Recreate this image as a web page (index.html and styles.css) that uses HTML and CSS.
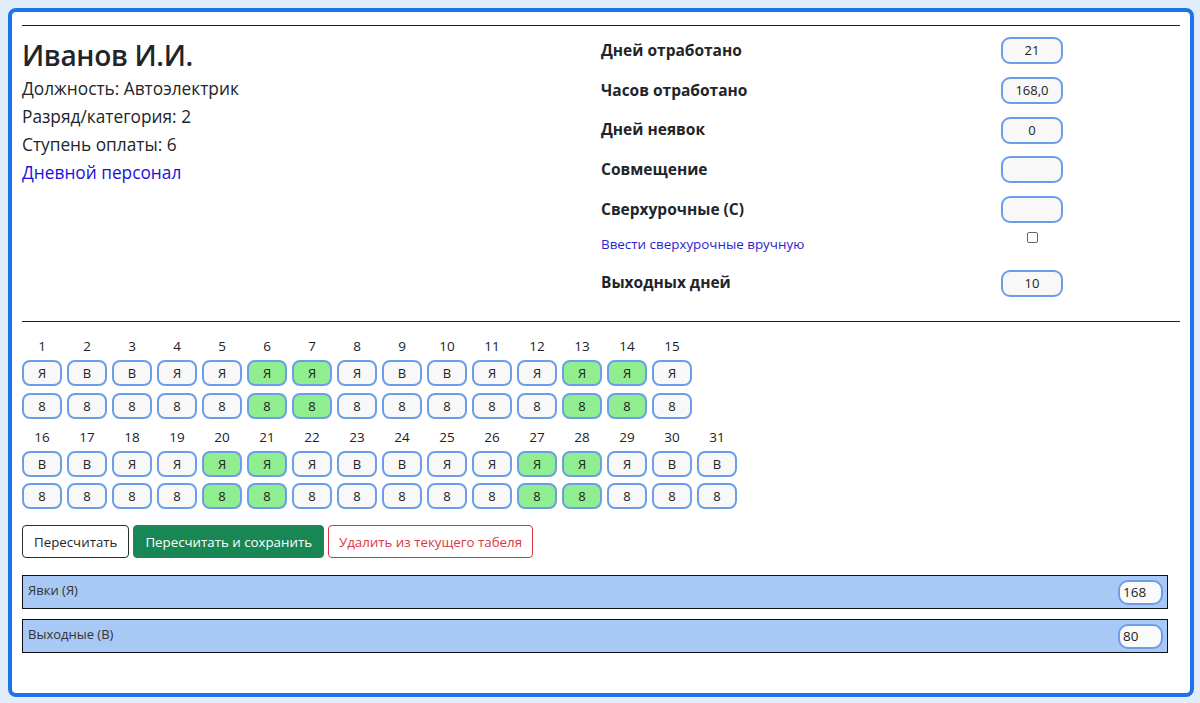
FILE: index.html
```html
<!DOCTYPE html>
<html lang="ru">
<head>
<meta charset="utf-8">
<title>Табель</title>
<link rel="stylesheet" href="styles.css">
</head>
<body>
<div class="card">
  <hr class="rule rule-top">
  <div class="info">
    <div class="person">
      <h1 class="name">Иванов И.И.</h1>
      <p class="line">Должность: Автоэлектрик</p>
      <p class="line">Разряд/категория: 2</p>
      <p class="line">Ступень оплаты: 6</p>
      <a class="line link">Дневной персонал</a>
    </div>
    <div class="stats">
      <div class="stat"><span class="stat-label">Дней отработано</span><span class="field">21</span></div>
      <div class="stat"><span class="stat-label">Часов отработано</span><span class="field">168,0</span></div>
      <div class="stat"><span class="stat-label">Дней неявок</span><span class="field">0</span></div>
      <div class="stat"><span class="stat-label">Совмещение</span><span class="field"></span></div>
      <div class="stat"><span class="stat-label">Сверхурочные (С)</span><span class="field"></span></div>
      <div class="stat stat-small"><a class="small-link">Ввести сверхурочные вручную</a><span class="check-wrap"><span class="check"></span></span></div>
      <div class="stat"><span class="stat-label">Выходных дней</span><span class="field">10</span></div>
    </div>
  </div>
  <hr class="rule rule-mid">
  <div class="days">
    <div class="day"><span class="num">1</span><span class="cell">Я</span><span class="cell">8</span></div>
    <div class="day"><span class="num">2</span><span class="cell">В</span><span class="cell">8</span></div>
    <div class="day"><span class="num">3</span><span class="cell">В</span><span class="cell">8</span></div>
    <div class="day"><span class="num">4</span><span class="cell">Я</span><span class="cell">8</span></div>
    <div class="day"><span class="num">5</span><span class="cell">Я</span><span class="cell">8</span></div>
    <div class="day"><span class="num">6</span><span class="cell on">Я</span><span class="cell on">8</span></div>
    <div class="day"><span class="num">7</span><span class="cell on">Я</span><span class="cell on">8</span></div>
    <div class="day"><span class="num">8</span><span class="cell">Я</span><span class="cell">8</span></div>
    <div class="day"><span class="num">9</span><span class="cell">В</span><span class="cell">8</span></div>
    <div class="day"><span class="num">10</span><span class="cell">В</span><span class="cell">8</span></div>
    <div class="day"><span class="num">11</span><span class="cell">Я</span><span class="cell">8</span></div>
    <div class="day"><span class="num">12</span><span class="cell">Я</span><span class="cell">8</span></div>
    <div class="day"><span class="num">13</span><span class="cell on">Я</span><span class="cell on">8</span></div>
    <div class="day"><span class="num">14</span><span class="cell on">Я</span><span class="cell on">8</span></div>
    <div class="day"><span class="num">15</span><span class="cell">Я</span><span class="cell">8</span></div>
  </div>
  <div class="days days-2">
    <div class="day"><span class="num">16</span><span class="cell">В</span><span class="cell">8</span></div>
    <div class="day"><span class="num">17</span><span class="cell">В</span><span class="cell">8</span></div>
    <div class="day"><span class="num">18</span><span class="cell">Я</span><span class="cell">8</span></div>
    <div class="day"><span class="num">19</span><span class="cell">Я</span><span class="cell">8</span></div>
    <div class="day"><span class="num">20</span><span class="cell on">Я</span><span class="cell on">8</span></div>
    <div class="day"><span class="num">21</span><span class="cell on">Я</span><span class="cell on">8</span></div>
    <div class="day"><span class="num">22</span><span class="cell">Я</span><span class="cell">8</span></div>
    <div class="day"><span class="num">23</span><span class="cell">В</span><span class="cell">8</span></div>
    <div class="day"><span class="num">24</span><span class="cell">В</span><span class="cell">8</span></div>
    <div class="day"><span class="num">25</span><span class="cell">Я</span><span class="cell">8</span></div>
    <div class="day"><span class="num">26</span><span class="cell">Я</span><span class="cell">8</span></div>
    <div class="day"><span class="num">27</span><span class="cell on">Я</span><span class="cell on">8</span></div>
    <div class="day"><span class="num">28</span><span class="cell on">Я</span><span class="cell on">8</span></div>
    <div class="day"><span class="num">29</span><span class="cell">Я</span><span class="cell">8</span></div>
    <div class="day"><span class="num">30</span><span class="cell">В</span><span class="cell">8</span></div>
    <div class="day"><span class="num">31</span><span class="cell">В</span><span class="cell">8</span></div>
  </div>
  <div class="actions">
    <button class="btn btn-dark">Пересчитать</button>
    <button class="btn btn-green">Пересчитать и сохранить</button>
    <button class="btn btn-red">Удалить из текущего табеля</button>
  </div>
  <div class="bar"><span class="bar-label">Явки (Я)</span><span class="bar-field">168</span></div>
  <div class="bar"><span class="bar-label">Выходные (В)</span><span class="bar-field">80</span></div>
</div>
</body>
</html>
```

FILE: styles.css
```css
* { box-sizing: border-box; }
html, body { margin: 0; padding: 0; }
body {
  background: #e2edfb;
  font-family: "Open Sans", "Noto Sans", sans-serif;
  color: #212529;
}
.card {
  margin: 8px 6px 6px 8px;
  height: 689px;
  background: #fff;
  border: 4px solid #1f73e8;
  border-radius: 8px;
  padding: 13px 10px 0 10px;
}
.rule {
  border: 0;
  border-top: 1px solid #222;
  margin: 0;
}
.info {
  display: grid;
  grid-template-columns: 579px 579px;
  height: 295px;
}
.person { padding-top: 9px; }
.name {
  margin: 0;
  font-size: 28px;
  font-weight: 600;
  line-height: 40px;
  color: #212529;
  letter-spacing: -0.3px;
}
.line {
  display: block;
  margin: 0;
  font-size: 17.3px;
  font-weight: 500;
  line-height: 28px;
}
.link { color: #1a10dc; }
.stats { padding-top: 4px; }
.stat {
  display: grid;
  grid-template-columns: 400px 62px;
  align-items: center;
  height: 39.7px;
}
.stat-label {
  font-weight: 700;
  font-size: 15.5px;
}
.stat-small { height: 34px; align-items: start; padding-top: 4px; }
.small-link {
  color: #2a1fd0;
  font-size: 13.4px;
  padding-top: 3px;
}
.check-wrap { display: flex; justify-content: center; }
.check {
  width: 11px;
  height: 11px;
  border: 1px solid #666;
  border-radius: 2px;
  background: #fff;
}
.field {
  display: block;
  height: 27px;
  margin-top: 2px;
  border: 2px solid #6a9ee9;
  border-radius: 9px;
  background: #f8f8f8;
  font-size: 13px;
  line-height: 23px;
  text-align: center;
  color: #222;
}
.rule-mid { margin-top: 0; }
.days {
  display: flex;
  gap: 5px;
  margin-top: 14px;
}
.days-2 { margin-top: 8px; }
.day {
  display: flex;
  flex-direction: column;
  align-items: center;
  width: 40px;
}
.num {
  font-size: 13.5px;
  line-height: 20px;
  height: 22px;
  color: #222;
}
.cell {
  width: 40px;
  height: 26px;
  border: 2px solid #6a9ee9;
  border-radius: 8px;
  background: #f8f8f8;
  font-size: 13px;
  line-height: 22px;
  text-align: center;
  color: #222;
}
.cell + .cell { margin-top: 6.5px; }
.num + .cell { margin-top: 2px; }
.cell.on { background: #90ee90; }
.actions {
  display: flex;
  gap: 4px;
  margin-top: 16px;
}
.btn {
  font-family: inherit;
  font-size: 13.3px;
  height: 33px;
  padding: 0 11px;
  border-radius: 4px;
  background: #fff;
  cursor: pointer;
}
.btn-dark { border: 1px solid #2b2b2b; color: #212529; }
.btn-green { border: 1px solid #198754; background: #198754; color: #fff; }
.btn-red { border: 1px solid #dc3545; color: #dc3545; padding: 0 10px; }
.bar {
  display: flex;
  justify-content: space-between;
  align-items: center;
  width: 1146px;
  height: 34px;
  margin-top: 17px;
  padding: 0 4px 0 5px;
  background: #a8c8f6;
  border: 1px solid #111;
}
.bar + .bar { margin-top: 10px; }
.bar-label {
  font-size: 13px;
  color: #333;
  margin-top: -4px;
}
.bar-field {
  width: 45px;
  height: 25px;
  border: 2px solid #6a9ee9;
  border-radius: 10px;
  background: #fafafa;
  font-size: 13.5px;
  line-height: 21px;
  padding-left: 3px;
  color: #222;
}
```
